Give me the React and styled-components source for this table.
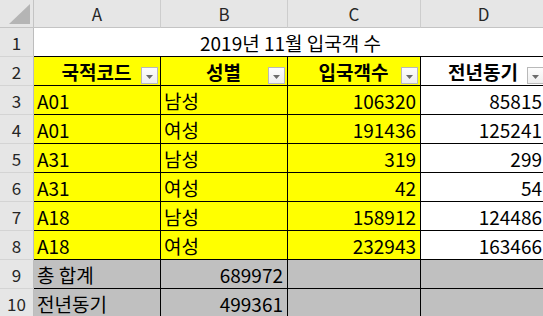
import React from "react";
import styled, { createGlobalStyle } from "styled-components";

const Global = createGlobalStyle`
  html, body { margin: 0; padding: 0; background: #fff; overflow: hidden; }
  * { box-sizing: border-box; }
`;

const Sheet = styled.div`
  display: grid;
  grid-template-columns: 34px 127px 127px 133px 126px;
  grid-template-rows: 28px repeat(10, 29px);
  font-family: "Noto Sans CJK KR", "Noto Sans", sans-serif;
  color: #000;
  width: 547px;
`;

const HeadBase = styled.div`
  background: #e6e6e6;
  color: #262626;
  font-size: 17px;
  display: flex;
  align-items: center;
  justify-content: center;
  border-right: 1px solid #cdcdcd;
  border-bottom: 1px solid #c4c4c4;
`;

const Corner = styled(HeadBase)`
  justify-content: flex-start;
  align-items: flex-start;
  border-right-color: #c4c4c4;
`;

const ColHead = styled(HeadBase)``;

const RowHead = styled(HeadBase)`
  border-right-color: #bdbdbd;
  border-bottom-color: #d4d4d4;
  padding-top: 1px;
`;

const TitleCell = styled.div`
  grid-column: span 4;
  background: #fff;
  font-size: 19px;
  display: flex;
  align-items: center;
  justify-content: center;
  border-bottom: 1px solid #000;
`;

const Cell = styled.div`
  position: relative;
  background: ${(p) => p.$bg || "#fff"};
  font-size: 19px;
  font-weight: ${(p) => (p.$bold ? 700 : 400)};
  display: flex;
  align-items: center;
  justify-content: ${(p) =>
    p.$align === "right" ? "flex-end" : p.$align === "center" ? "center" : "flex-start"};
  padding: 0 4px 0 3px;
  border-right: 1px solid #000;
  border-bottom: 1px solid #000;
  white-space: nowrap;
  overflow: hidden;
`;

const FilterButton = styled.div`
  position: absolute;
  right: 2px;
  bottom: 1px;
  width: 17px;
  height: 17px;
  border: 1px solid #b9b9b9;
  background: linear-gradient(#fdfdfd, #eeeeee);
  display: flex;
  align-items: center;
  justify-content: center;
  padding-top: 2px;
`;

const FilterIcon = () => (
  <svg width="7" height="4" viewBox="0 0 7 4">
    <path d="M0 0 H7 L3.5 4 Z" fill="#6b6b6b" />
  </svg>
);

const YELLOW = "#ffff00";
const GRAY = "#c0c0c0";

const headers = ["국적코드", "성별", "입국객수", "전년동기"];
const rows = [
  ["A01", "남성", "106320", "85815"],
  ["A01", "여성", "191436", "125241"],
  ["A31", "남성", "319", "299"],
  ["A31", "여성", "42", "54"],
  ["A18", "남성", "158912", "124486"],
  ["A18", "여성", "232943", "163466"],
];
const totals = [
  ["총 합계", "689972"],
  ["전년동기", "499361"],
];

export default function App() {
  return (
    <>
      <Global />
      <Sheet>
        <Corner>
          <svg width="33" height="27" viewBox="0 0 33 27">
            <path d="M30 4 L30 24 L9 24 Z" fill="#b5b5b5" />
          </svg>
        </Corner>
        {["A", "B", "C", "D"].map((c) => (
          <ColHead key={c}>{c}</ColHead>
        ))}

        <RowHead>1</RowHead>
        <TitleCell>2019년 11월 입국객 수</TitleCell>

        <RowHead>2</RowHead>
        {headers.map((h, i) => (
          <Cell key={h} $bg={i === 3 ? "#fff" : YELLOW} $bold $align="center">
            {h}
            <FilterButton>
              <FilterIcon />
            </FilterButton>
          </Cell>
        ))}

        {rows.map((r, idx) => (
          <React.Fragment key={idx}>
            <RowHead>{idx + 3}</RowHead>
            <Cell $bg={YELLOW}>{r[0]}</Cell>
            <Cell $bg={YELLOW}>{r[1]}</Cell>
            <Cell $bg={YELLOW} $align="right">{r[2]}</Cell>
            <Cell $bg="#fff" $align="right">{r[3]}</Cell>
          </React.Fragment>
        ))}

        {totals.map((t, idx) => (
          <React.Fragment key={t[0]}>
            <RowHead>{idx + 9}</RowHead>
            <Cell $bg={GRAY}>{t[0]}</Cell>
            <Cell $bg={GRAY} $align="right">{t[1]}</Cell>
            <Cell $bg={GRAY} />
            <Cell $bg={GRAY} />
          </React.Fragment>
        ))}
      </Sheet>
    </>
  );
}
